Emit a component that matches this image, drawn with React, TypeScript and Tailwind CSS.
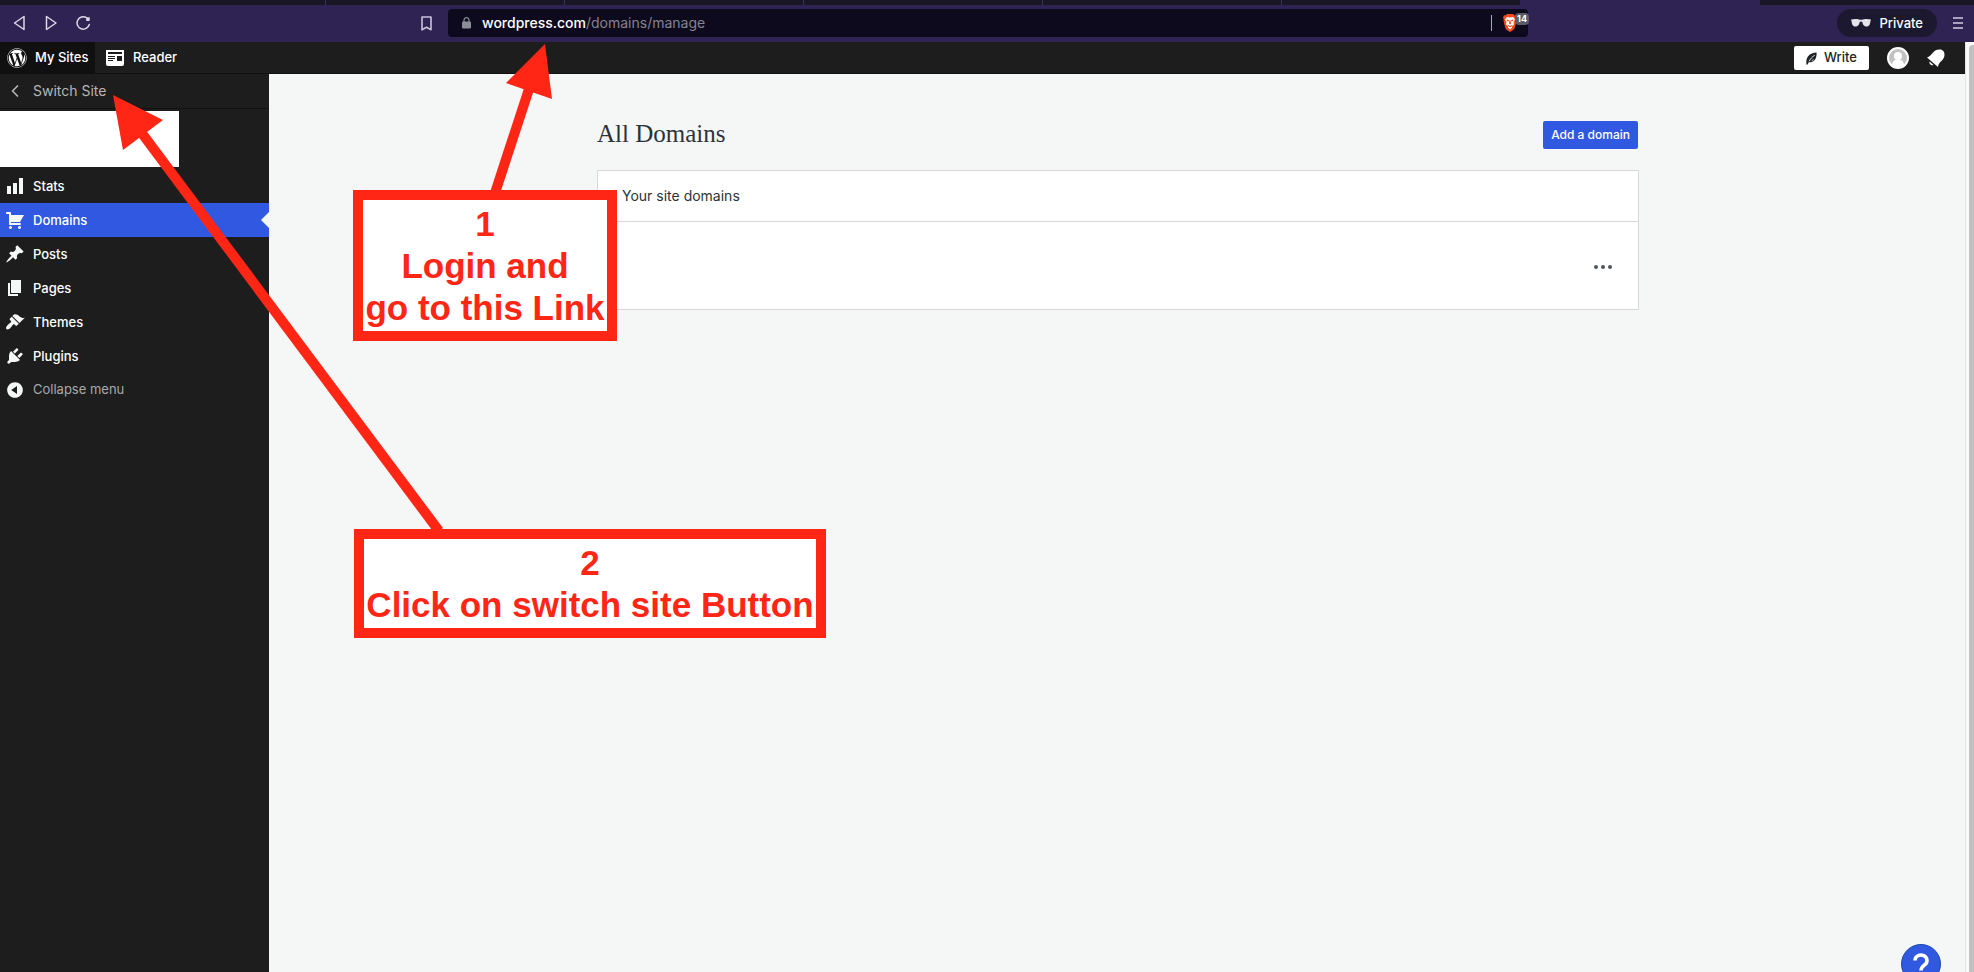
import type { ReactNode } from 'react';
import { FaWordpress } from 'react-icons/fa';
import { ChevronLeft } from 'lucide-react';

type MenuItem = {
  label: string;
  path: string;
  active?: boolean;
};

const MENU: MenuItem[] = [
  { label: 'Stats', path: 'M18 18V2h-4v16h4zm-6 0V7H8v11h4zm-6 0v-8H2v8h4z' },
  {
    label: 'Domains',
    active: true,
    path: 'M6 13h9c.55 0 1 .45 1 1s-.45 1-1 1H5c-.55 0-1-.45-1-1V4H2c-.55 0-1-.45-1-1s.45-1 1-1h3c.55 0 1 .45 1 1v2h13l-4 7H6v1zm-.5 3c.83 0 1.5.67 1.5 1.5S6.33 19 5.5 19 4 18.33 4 17.5 4.67 16 5.5 16zm9 0c.83 0 1.5.67 1.5 1.5s-.67 1.5-1.5 1.5-1.5-.67-1.5-1.5.67-1.5 1.5-1.5z',
  },
  {
    label: 'Posts',
    path: 'M10.44 3.02l1.82-1.82 6.36 6.35-1.83 1.82c-1.05-.68-2.48-.57-3.41.36l-.75.75c-.92.93-1.04 2.35-.35 3.41l-1.83 1.82-2.41-2.41-2.8 2.79c-.42.42-3.38 2.71-3.8 2.29s1.86-3.39 2.28-3.81l2.79-2.79L4.1 9.36l1.83-1.82c1.05.69 2.48.57 3.4-.36l.75-.75c.93-.92 1.05-2.35.36-3.41z',
  },
  { label: 'Pages', path: 'M6 15V2h10v13H6zm-1 1h8v2H3V5h2v11z' },
  {
    label: 'Themes',
    path: 'M14.48 11.06L7.41 3.99l1.5-1.5c.5-.56 2.3-.47 3.51.32 1.21.8 1.43 1.28 2.91 2.1 1.18.64 2.45 1.26 4.45.85zm-.71.71L6.7 4.7 4.93 6.47c-.39.39-.39 1.02 0 1.41l1.06 1.06c.39.39.39 1.03 0 1.42-.6.6-1.43 1.11-2.21 1.69-.35.26-.7.53-1.01.84C1.43 14.23.4 16.08 1.4 17.07c.99 1 2.84-.03 4.18-1.36.31-.31.58-.66.85-1.02.57-.78 1.08-1.61 1.69-2.21.39-.39 1.02-.39 1.41 0l1.06 1.06c.39.39 1.02.39 1.41 0z',
  },
  {
    label: 'Plugins',
    path: 'M13.11 4.36L9.87 7.6 8 5.73l3.24-3.24c.35-.34 1.05-.2 1.56.32.52.51.66 1.21.31 1.55zm-8 1.77l.91-1.12 9.01 9.01-1.19.84c-.71.71-2.63 1.16-3.82 1.16H6.14L4.9 17.26c-.59.59-1.54.59-2.12 0-.59-.58-.59-1.53 0-2.12l1.24-1.24v-3.88c0-1.13.4-3.19 1.09-3.89zm7.26 3.97l3.24-3.24c.34-.35 1.04-.21 1.55.31.52.51.66 1.21.31 1.55l-3.24 3.25z',
  },
];

const COLLAPSE_PATH =
  'M10 2.16c4.33 0 7.84 3.51 7.84 7.84s-3.51 7.84-7.84 7.84S2.16 14.33 2.16 10 5.71 2.16 10 2.16zm2 11.72V6.12L6.18 9.97z';

function Dashicon({ path }: { path: string }) {
  return (
    <svg viewBox="0 0 20 20" className="size-5 shrink-0" fill="#f6f7f7" aria-hidden="true">
      <path d={path} fillRule="evenodd" />
    </svg>
  );
}

function TabStrip() {
  return (
    <div className="flex h-[5px] shrink-0 bg-[#181624] pl-[87px]">
      {[1, 2, 3, 4, 5].map((n) => (
        <div key={n} className="w-[239px] border-r border-[#3b2f5c]" />
      ))}
      <div className="w-[238px]" />
      <div className="w-[240px] bg-[#2e2353]" />
    </div>
  );
}

function BraveShield() {
  return (
    <svg viewBox="0 0 28 36" className="h-[18px] w-[14px]" aria-hidden="true">
      <path d="M8 0h12l3 3 3-.5L28 7l-1.500 4 .5 3-4 15-3 3-6 4-6-4-3-3L1 14l.5-3L0 7l2-4.500L5 3z" fill="#fb4a1f" />
      <path d="M8 6l6 1 6-1 4 5-3 5 1 5-4 3v3l-4 4-4-4v-3l-4-3 1-5-3-5z" fill="#fff" />
      <path d="M7 11l5 1-1 3-3-1zM21 11l-5 1 1 3 3-1zM13 13h2l1 6-2 2-2-2zM9 21l5 3 5-3-3 5h-4z" fill="#fb4a1f" />
    </svg>
  );
}

function BrowserBar() {
  return (
    <div className="flex h-[37px] shrink-0 items-center bg-[#2e2353] pb-px text-sm">
      <div className="flex w-[448px] shrink-0 items-center justify-between pr-4 pl-3">
        <div className="flex items-center gap-4 text-[#dcd9e6]">
          <button aria-label="Back">
            <svg viewBox="0 0 16 16" className="size-4" fill="none" stroke="currentColor" strokeWidth="1.5" strokeLinejoin="round" aria-hidden="true">
              <path d="M12 1.500v13L2.500 8z" />
            </svg>
          </button>
          <button aria-label="Forward">
            <svg viewBox="0 0 16 16" className="size-4" fill="none" stroke="currentColor" strokeWidth="1.5" strokeLinejoin="round" aria-hidden="true">
              <path d="M2.500 1.500v13L12 8z" />
            </svg>
          </button>
          <button aria-label="Reload">
            <svg viewBox="0 0 16 16" className="size-4" fill="none" stroke="currentColor" strokeWidth="1.5" strokeLinecap="round" aria-hidden="true">
              <path d="M13.300 9.500A6.200 6.200 0 1 1 10.500 2.600" />
              <circle cx="11.800" cy="4" r="1.800" fill="currentColor" stroke="none" />
              <path d="M13.500 1.500v4.500H10z" fill="currentColor" stroke="none" />
            </svg>
          </button>
        </div>
        <button aria-label="Bookmark this page" className="text-[#c9c4da]">
          <svg viewBox="0 0 11 15" className="h-[15px] w-[11px]" fill="none" stroke="currentColor" strokeWidth="1.6" strokeLinejoin="round" aria-hidden="true">
            <path d="M1 1h9v12.800L5.500 11.200 1 13.800z" />
          </svg>
        </button>
      </div>
      <div className="flex h-7 w-[1080px] min-w-0 items-center rounded bg-[#0e0a1e]">
        <button className="flex min-w-0 flex-1 items-center pl-3.5 text-left" aria-label="Address">
          <svg viewBox="0 0 9 12" className="mr-[11px] h-3 w-[9px]" aria-hidden="true">
            <path d="M2 5V3.200a2.500 2.500 0 0 1 5 0V5" fill="none" stroke="#8b8e96" strokeWidth="1.200" />
            <rect y="4.500" width="9" height="7" rx="1" fill="#8b8e96" />
          </svg>
          <span className="font-medium text-white">wordpress.com</span>
          <span className="text-[#85838c]">/domains/manage</span>
        </button>
        <div className="h-4 w-px bg-[#a9a7b3]" />
        <button aria-label="Brave Shields" className="relative mr-[11px] ml-[11px]">
          <BraveShield />
          <span className="absolute -top-px left-3 rounded bg-[#5a5c68] px-0.5 text-[9px] leading-3 font-bold text-white">14</span>
        </button>
      </div>
      <div className="flex flex-1 items-center justify-end gap-4 pr-[11px]">
        <button className="flex h-7 items-center gap-2 rounded-full bg-[#1b1830] px-3.5 font-medium text-white">
          <svg viewBox="0 0 20 8" className="h-2 w-5" fill="#e4e3ea" aria-hidden="true">
            <path d="M0 .5C3-.2 7-.2 9 .8h2c2-1 6-1 9-.3l-.5 1.500C19 6 18 7.500 15.500 7.500 12.500 7.500 11.700 5 11.300 3c-.3-.8-2.300-.8-2.600 0C8.300 5 7.500 7.500 4.500 7.500 2 7.500 1 6 .5 2z" />
          </svg>
          <span className="text-[13px]">Private</span>
        </button>
        <button aria-label="Browser menu" className="flex flex-col gap-[3px]">
          <span className="h-0.5 w-2.5 bg-[#a9a3bf]" />
          <span className="h-0.5 w-2.5 bg-[#a9a3bf]" />
          <span className="h-0.5 w-2.5 bg-[#a9a3bf]" />
        </button>
      </div>
    </div>
  );
}

function Masterbar() {
  return (
    <header className="flex h-8 shrink-0 border-b border-[#101010] bg-[#1d1d1d] text-[13px] font-medium text-white">
      <a href="#sites" className="flex w-[95px] items-center gap-2 bg-[#101010] pt-px pl-[7px]">
        <FaWordpress size={20} aria-hidden="true" />
        My Sites
      </a>
      <a href="#reader" className="flex items-center gap-[9px] px-[11px] pt-px">
        <svg viewBox="0 0 18 16" className="h-4 w-[18px]" aria-hidden="true">
          <path d="M0 0h18v14a2 2 0 0 1-2 2H2a2 2 0 0 1-2-2z" fill="#fff" />
          <path d="M2 2h14v2H2zM2 6h7v1H2zM2 8h7v1H2zM2 10h5v1H2zM11 6h5v5h-5z" fill="#1d1d1d" />
        </svg>
        Reader
      </a>
      <div className="ml-auto flex items-center gap-[18px] pt-px pr-5">
        <button className="flex h-6 items-center gap-[7px] rounded-xs bg-white px-3 text-[#1d2327]">
          <svg viewBox="0 0 12 14" className="h-[13px] w-[11px]" aria-hidden="true">
            <path d="M.5 13.500C-.5 6 3 1 11.500.5 12 7 9 12 3 11l-1.500 2.800z" fill="#1d2327" />
            <path d="M3.500 10C5 7 7 5 9.500 3.500" stroke="#fff" strokeWidth="1" fill="none" />
            <path d="M5.500 9.300l3.500-1.800-1.500 1.800z" fill="#fff" />
          </svg>
          Write
        </button>
        <button aria-label="My Profile">
          <svg viewBox="0 0 22 22" className="size-[22px]" aria-hidden="true">
            <circle cx="11" cy="11" r="10" fill="#c2c2c2" />
            <circle cx="11" cy="9" r="4" fill="#fff" />
            <path d="M5 18c0-3.500 2.500-5.500 6-5.500s6 2 6 5.500c-2 3-10 3-12 0z" fill="#fff" />
            <circle cx="11" cy="11" r="10" fill="none" stroke="#fff" strokeWidth="2" />
          </svg>
        </button>
        <button aria-label="Notifications">
          <svg viewBox="0 0 18 18" className="size-[18px]" fill="#fff" aria-hidden="true">
            <path d="M0 8.500C5 7.500 5.500.5 12.500.5c3 0 5 2 5 5C17.500 12 11.500 12 11 18z" />
            <path d="M2.500 12.500l4 3.500c-1.500 1.300-4.800-1.200-4-3.500z" />
          </svg>
        </button>
      </div>
    </header>
  );
}

function Sidebar() {
  return (
    <nav className="w-[269px] shrink-0 bg-[#1d1d1d] text-[13px] font-medium text-white">
      <button className="flex h-[35px] w-full items-center gap-2 border-b border-[#101010] pl-[5px] text-sm font-normal text-[#b4b6b8]">
        <ChevronLeft size={20} aria-hidden="true" />
        Switch Site
      </button>
      <div className="mt-0.5 mb-0.5 h-14 w-[179px] bg-white" />
      <ul>
        {MENU.map((item) => (
          <li key={item.label}>
            <a
              href={`#${item.label.toLowerCase()}`}
              className={`relative flex h-[34px] items-center gap-2 pl-[5px] ${item.active ? 'bg-[#3158e1]' : ''}`}
            >
              <Dashicon path={item.path} />
              <span className="pt-0.5">{item.label}</span>
              {item.active && (
                <svg viewBox="0 0 8 16" className="absolute right-0 h-4 w-2" aria-hidden="true">
                  <path d="M8 0v16L0 8z" fill="#f5f7f6" />
                </svg>
              )}
            </a>
          </li>
        ))}
      </ul>
      <button className="flex h-[34px] items-center gap-2 pl-[5px] font-normal text-[#a7aaad]">
        <Dashicon path={COLLAPSE_PATH} />
        Collapse menu
      </button>
    </nav>
  );
}

function DomainsPage() {
  return (
    <main className="min-w-0 flex-1 pl-0.5">
      <div className="mx-auto max-w-[1042px] pt-[47px]">
        <div className="flex h-7 items-start justify-between pr-px">
          <h1 className="font-['Liberation_Serif',serif] text-[25px] leading-[26px] text-[#2c3338]">All Domains</h1>
          <button className="h-7 rounded-xs bg-[#3158e1] px-2 text-xs font-medium text-white">Add a domain</button>
        </div>
        <section className="mt-[21px] border border-[#d5d7d8] bg-white">
          <h2 className="flex h-[51px] items-center border-b border-[#d5d7d8] px-6 text-sm text-[#2c3338]">Your site domains</h2>
          <div className="flex h-[87px] items-center justify-end px-[25px] pt-0.5">
            <button aria-label="Domain actions">
              <svg viewBox="0 0 20 4" className="h-1 w-5" fill="#50575e" aria-hidden="true">
                <circle cx="3" cy="2" r="2" />
                <circle cx="10" cy="2" r="2" />
                <circle cx="17" cy="2" r="2" />
              </svg>
            </button>
          </div>
        </section>
      </div>
    </main>
  );
}

function Callout({ className, children }: { className: string; children: ReactNode }) {
  return (
    <div className={`absolute border-[10px] border-[#ff2616] bg-white pt-[3px] text-center font-['Liberation_Sans',Arial,sans-serif] text-[35px] leading-[42px] font-bold whitespace-nowrap text-[#ff2616] ${className}`}>
      {children}
    </div>
  );
}

// Instruction boxes and arrows drawn over the page
function Annotations() {
  return (
    <div className="pointer-events-none absolute inset-0 overflow-hidden">
      <svg width="600" height="560" className="absolute top-0 left-0" fill="#ff2616" stroke="#ff2616" aria-hidden="true">
        <path d="M529 89L495 193" strokeWidth="10" />
        <path d="M545 44L506 83L552 99z" stroke="none" />
        <path d="M141 132L439 531" strokeWidth="10" />
        <path d="M113 95L163 120L123 150z" stroke="none" />
      </svg>
      <Callout className="top-[190px] left-[353px] h-[151px] w-[264px]">
        <p>1</p>
        <p>Login and</p>
        <p>go to this Link</p>
      </Callout>
      <Callout className="top-[529px] left-[354px] h-[109px] w-[472px]">
        <p>2</p>
        <p>Click on switch site Button</p>
      </Callout>
    </div>
  );
}

export default function App() {
  return (
    <div className="relative flex h-screen flex-col overflow-hidden bg-[#f5f7f6] font-[Inter,sans-serif]">
      <TabStrip />
      <BrowserBar />
      <div className="flex min-h-0 flex-1">
        <div className="relative flex min-w-0 flex-1 flex-col">
          <Masterbar />
          <div className="flex min-h-0 flex-1">
            <Sidebar />
            <DomainsPage />
          </div>
          <button aria-label="Help" className="absolute right-6 -bottom-3 size-10 rounded-full border border-[#1d4aa8] bg-[#3158e1]">
            <svg viewBox="0 0 38 38" className="size-full" fill="none" stroke="#fff" strokeWidth="3.500" aria-hidden="true">
              <path d="M13 15.500a6 5.500 0 1 1 9.500 4.500c-2 1.500-3.500 2.500-3.500 5.500" />
              <path d="M19 27v3.500" />
            </svg>
          </button>
        </div>
        <div className="flex w-[9px] shrink-0 justify-end border-l border-[#e4e4e4] bg-[#fafafa] pt-[3px]">
          <div className="w-[5px] rounded-tl bg-[#c1c1c1]" />
        </div>
      </div>
      <Annotations />
    </div>
  );
}
